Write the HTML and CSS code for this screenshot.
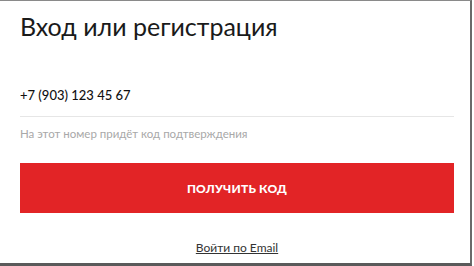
FILE: index.html
```html
<!DOCTYPE html>
<html lang="ru">
<head>
<meta charset="utf-8">
<link rel="stylesheet" href="styles.css">
</head>
<body>
<div class="card">
  <h1 class="title">Вход или регистрация</h1>
  <div class="field">+7 (903) 123 45 67</div>
  <div class="hint">На этот номер придёт код подтверждения</div>
  <button class="btn">ПОЛУЧИТЬ КОД</button>
  <div class="alt"><a class="link" href="#">Войти по Email</a></div>
</div>
</body>
</html>
```
FILE: styles.css
```css
html, body {
  margin: 0;
  padding: 0;
  background: #fff;
}
body {
  width: 474px;
  height: 266px;
  overflow: hidden;
  font-family: Lato, "Noto Sans", sans-serif;
}
.card {
  box-sizing: border-box;
  width: 472px;
  height: 266px;
  border-top: 1px solid #8a8a8a;
  border-right: 2px solid #6a6a6a;
  border-bottom: 3px solid #5a5a5a;
  padding: 10px 16px 0 20px;
  display: flex;
  flex-direction: column;
}
.title {
  margin: 0;
  font-size: 25px;
  line-height: 30px;
  font-weight: 400;
  color: #1a1a1a;
}
.field {
  margin-top: 45px;
  padding-bottom: 12px;
  border-bottom: 1px solid #e6e6e6;
  font-size: 13px;
  line-height: 18px;
  font-weight: 500;
  color: #111;
}
.hint {
  margin-top: 10px;
  font-size: 11.5px;
  line-height: 14px;
  color: #a8a8a8;
}
.btn {
  margin-top: 22px;
  height: 50px;
  border: none;
  background: #e22426;
  color: #fff;
  font-family: Lato, "Noto Sans", sans-serif;
  font-weight: 900;
  font-size: 12px;
  letter-spacing: 0.2px;
  padding: 0;
}
.alt {
  margin-top: 27px;
  text-align: center;
  font-size: 12px;
  line-height: 16px;
}
.link {
  color: #333;
  text-decoration: underline;
}
```
